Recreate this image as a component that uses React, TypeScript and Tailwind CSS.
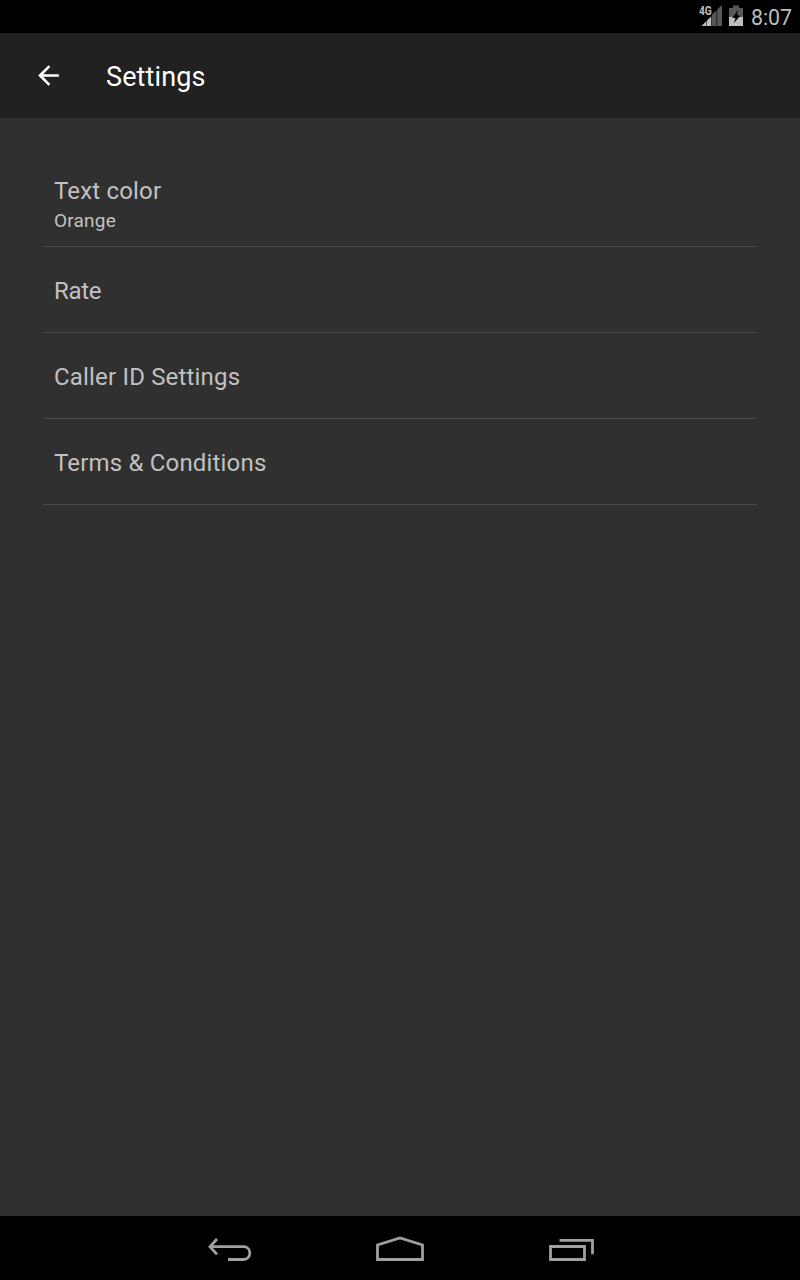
type Preference = { title: string; summary?: string; spacing: string };

const preferences: Preference[] = [
  { title: "Text color", summary: "Orange", spacing: "tracking-[0.18px]" },
  { title: "Rate", spacing: "tracking-[-0.3px]" },
  { title: "Caller ID Settings", spacing: "tracking-[0.18px]" },
  { title: "Terms & Conditions", spacing: "tracking-[0.18px]" },
];

function SignalIcon() {
  return (
    <div className="relative h-[33px] w-[24px]">
      <svg className="h-[33px] w-[24px]" viewBox="698 0 24 33">
        <path d="M701.500 26l5-5v5z" fill="#bebebe" />
        <path d="M707 20.500l4.300-4.300V26H707z" fill="#bebebe" />
        <path d="M712 14.500l4.500-4v15.500H712zM717.200 9.500l4.800-4.500V26h-4.800z" fill="#555a57" />
      </svg>
      <span className="absolute left-[1px] top-[5px] origin-left scale-x-[0.85] text-[12px] font-bold leading-[12px] text-[#bebebe]">
        4G
      </span>
    </div>
  );
}

function BatteryIcon() {
  return (
    <svg className="ml-[7px] h-[33px] w-[14px]" viewBox="729 0 14 33">
      <path d="M729 8h4V5.500h6V8h4v9h-14z" fill="#555a57" />
      <path d="M729 17h14v9h-14z" fill="#bebebe" />
      <path d="M738 10l-5.500 7.500 3 1-2 5 6.500-7.500-3-1.500z" fill="#000" />
    </svg>
  );
}

export default function App() {
  return (
    <div className="flex h-[1280px] w-[800px] flex-col overflow-hidden bg-[#303030] font-['Roboto',sans-serif]">
      <div className="flex h-[33px] shrink-0 items-center justify-end bg-black pr-[8px]">
        <SignalIcon />
        <BatteryIcon />
        <div className="ml-[8px] pt-[2px] text-[21.3px] leading-[33px] text-[#bebebe]">8:07</div>
      </div>
      <header className="flex h-[85px] shrink-0 items-center bg-[#212121] pl-[33px]">
        <svg className="h-[31px] w-[31px]" viewBox="0 0 24 24" fill="#fff">
          <path d="M20 11H7.830l5.590-5.590L12 4l-8 8 8 8 1.410-1.410L7.830 13H20v-2z" />
        </svg>
        <h1 className="ml-[42px] pt-[2px] text-[27px] leading-8 tracking-[0.12px] text-white">Settings</h1>
      </header>
      <main className="flex grow flex-col px-[43px] pt-[43px]">
        {preferences.map(({ title, summary, spacing }) => (
          <div
            key={title}
            className="flex h-[86px] flex-col justify-center border-b border-[#4c4c4c] pl-[11px] pt-[2px] text-[#c1c1c1]"
          >
            <div className={`text-[24px] leading-8 ${spacing}`}>{title}</div>
            {summary && <div className="text-[19px] leading-7 tracking-[0.2px]">{summary}</div>}
          </div>
        ))}
      </main>
      <nav className="flex h-16 shrink-0 items-center bg-black text-[#a0a0a0]">
        <svg className="ml-[204px] h-16 w-[52px]" viewBox="204 1216 52 64" fill="none" stroke="currentColor" strokeWidth="2.800">
          <path d="M217 1239l-7 7.700 7 7.700M210 1246.700h33.500c4 0 6.300 3 6.300 6.400s-2.300 6.400-6.300 6.400h-15.500" />
        </svg>
        <svg className="ml-[116px] h-16 w-[56px]" viewBox="372 1216 56 64" fill="none" stroke="currentColor" strokeWidth="2.800">
          <path d="M377.500 1259.500v-14.500l22.500-7 22.500 7v14.500z" />
        </svg>
        <svg className="ml-[116px] h-16 w-[56px]" viewBox="544 1216 56 64" fill="none" stroke="currentColor" strokeWidth="2.800">
          <path d="M550.500 1246.500h34v13h-34zM559.500 1240.300h33v14" />
        </svg>
      </nav>
    </div>
  );
}
